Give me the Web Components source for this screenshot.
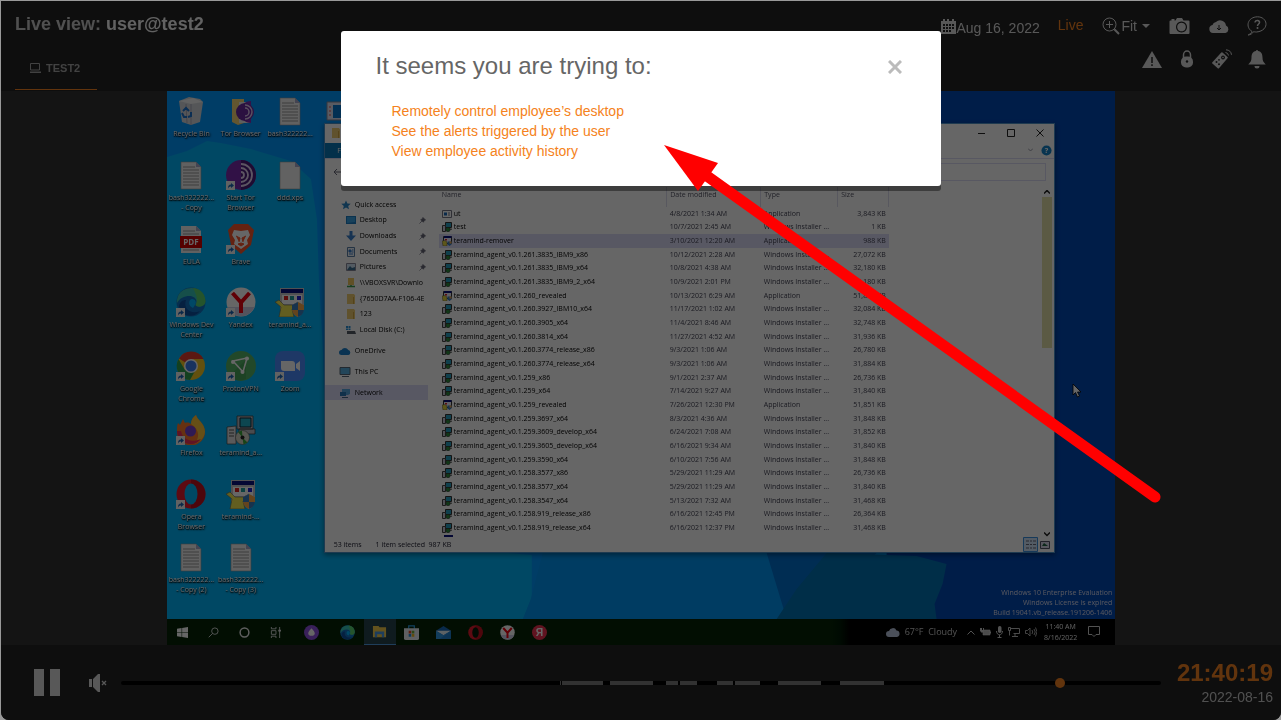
<!DOCTYPE html>
<html lang="en">
<head>
<meta charset="utf-8">
<title>Live view: user@test2</title>
<style>
  html, body { margin: 0; min-height: 100%; }
  body { font-family: "Liberation Sans", Arial, sans-serif; background: #999; }
</style>
</head>
<body>
<live-app></live-app>
<script>
const ICONS = {
  laptop: ['0 0 12 12', '<path d="M1.5 1.5h9v6.5h-9z" fill="none" stroke="currentColor"/><path d="M1 9.5h11v1.5H1z" fill="currentColor"/>'],
  calendar: ['0 0 15 15', '<path fill="currentColor" fill-rule="evenodd" d="M0 2h2V0h2v2h2V0h2v2h3V0h2v2h2v13H0zM2 5v2h2V5zm3 0v2h2V5zm3 0v2h2V5zm3 0v2h2V5zM2 8v2h2V8zm3 0v2h2V8zm3 0v2h2V8zm3 0v2h2V8zM2 11v2h2v-2zm3 0v2h2v-2zm3 0v2h2v-2z"/>'],
  zoom: ['0 0 18 18', '<g fill="none" stroke="currentColor"><circle cx="7.5" cy="7.5" r="6.5"/><path d="M7.5 4v7M4 7.5h7"/><path d="M12.3 12.3l4.7 4.7" stroke-width="2"/></g>'],
  caret: ['0 0 8 4', '<path d="M0 0h8L4 4z" fill="currentColor"/>'],
  camera: ['0 0 20 16', '<path fill="currentColor" fill-rule="evenodd" d="M1 2.500h1V1h3v1.500h1L7.500 0h5L14 2.500h5a1 1 0 0 1 1 1V15a1 1 0 0 1-1 1H1a1 1 0 0 1-1-1V3.500a1 1 0 0 1 1-1zM12 3.500a5.500 5.500 0 1 0 .01 0zm0 1.200a4.300 4.300 0 1 1-.01 0z"/>'],
  cloud: ['0 0 20 14', '<path fill="currentColor" d="M4 14a4 4 0 0 1-.5-7.900A4 4 0 0 1 7 3a6 6 0 0 1 10 3.500A4 4 0 0 1 16.500 14z"/><path d="M10 6v5M8 9l2 2 2-2" stroke="#232323" fill="none"/>'],
  help: ['0 0 20 20', '<path fill="none" stroke="currentColor" d="M5 15.500C-2 11 .5 1 10.500.8c11 .2 12 14-1 15.200-1.500 0-2-.2-3-.3-1 1.800-3 3.100-5.300 3.300C3 18 4.500 17 5 15.500z"/><path fill="none" stroke="currentColor" stroke-width="1.500" d="M8 6.500c.2-3 5-2.500 4.500.2-.3 1.500-2 1.300-2 3.300"/><circle cx="10.500" cy="12" r="1" fill="currentColor"/>'],
  warn: ['0 0 20 17', '<path fill="currentColor" d="M10 0l10 17H0z"/><path stroke="#232323" stroke-width="1.500" d="M10 6v6M10 13.300v1.700"/>'],
  lock: ['0 0 20 18', '<path d="M6.500 8V5a3.500 4 0 0 1 7 0v3" fill="none" stroke="currentColor" stroke-width="1.500"/><rect x="4" y="6.500" width="12" height="11" rx="5" fill="currentColor"/><circle cx="10" cy="11.500" r="1.200" fill="#232323"/>'],
  remote: ['0 0 20 20', '<path fill="currentColor" d="M10.500 3.500l5 4.500a1 1 0 0 1 0 1.300L7 19.200a1 1 0 0 1-1.300 0L.4 14.500a1 1 0 0 1 0-1.300L9.300 3.600a1 1 0 0 1 1.200-.1z"/><g fill="#232323"><circle cx="11" cy="8.500" r="1.900"/><circle cx="4.500" cy="13" r="1"/><circle cx="7" cy="15.300" r="1"/><circle cx="7" cy="10.800" r=".9"/></g><circle cx="11" cy="8.500" r=".8" fill="currentColor"/><path d="M13.500 3.500q2.500.2 3 3M14 .8q5 .4 5.500 5" fill="none" stroke="currentColor"/>'],
  bell: ['0 0 20 20', '<path fill="currentColor" d="M9 2a1 1 0 0 1 2 0c3.500.6 4.500 3.500 4.500 6.500 0 3.500 1 4.500 3.200 7H1.300c2.200-2.500 3.200-3.500 3.200-7C4.500 5.500 5.500 2.600 9 2zM7.500 17h5a2.500 2.500 0 0 1-5 0z"/>'],
  pause: ['0 0 26 27', '<path fill="currentColor" d="M0 0h10v27H0zM16 0h10v27H16z"/>'],
  mute: ['0 0 18 18', '<path fill="currentColor" d="M0 5h3v8H0zM4 5l5-5h2v18H9l-5-5z"/><path d="M13 7l4 4M17 7l-4 4" stroke="currentColor" stroke-width="1.300"/>'],
  close: ['0 0 14 14', '<path d="M1 1l12 12M13 1L1 13" stroke="currentColor" stroke-width="3"/>'],

  bin: ['0 0 30 30', '<path d="M3 5l10-4 11 2 3 3-3 20-9 3-9-3z" fill="#d5d8dc"/><path d="M3 5l12 3 12-2-10-4z" fill="#f4f4f4"/><path d="M15 8v21M10 8l1 19" stroke="#aab" fill="none"/><path d="M7 15l3-3 3 3M6 17l2 4h3M12 21l3-1v-4" fill="none" stroke="#1b74d0" stroke-width="2"/>'],
  torfolder: ['0 0 30 30', '<path d="M6 3h12v24l-6 2-6-3z" fill="#f7d678"/><path d="M13 6h12v21H13z" fill="#eee"/><path d="M25 5a11 11 0 0 0 0 22z" fill="#7d2db5"/><circle cx="19" cy="16" r="9" fill="#6b2aa0"/><path d="M19 9a7 7 0 0 1 0 14M19 12a4 4 0 0 1 0 8" fill="none" stroke="#e0c8f0" stroke-width="1.500"/>'],
  textfile: ['0 0 30 30', '<path d="M5 2h15l5 5v22H5z" fill="#f3f3f3" stroke="#999" stroke-width=".6"/><path d="M20 2l5 5h-5z" fill="#aac"/><path d="M7 7h12M7 10h16M7 13h16M7 16h16M7 19h16M7 22h16M7 25h16" stroke="#999"/>'],
  blankfile: ['0 0 30 30', '<path d="M5 2h15l5 5v22H5z" fill="#f5f5f5" stroke="#999" stroke-width=".6"/><path d="M20 2l5 5h-5z" fill="#aac"/>'],
  pdf: ['0 0 30 30', '<path d="M5 2h15l5 5v22H5z" fill="#f3f3f3"/><path d="M20 2l5 5h-5z" fill="#aac"/><path d="M7 7h12M7 10h16M7 26h16" stroke="#999"/><path d="M4 12h22v12H4z" fill="#d40000"/><text x="15" y="21" font-family="Open Sans" font-weight="700" font-size="8" text-anchor="middle" fill="#fff">PDF</text>'],
  tor: ['0 0 30 30', '<circle cx="15" cy="15" r="15" fill="#7a2bb0"/><path d="M15 0a15 15 0 0 1 0 30z" fill="#4b1b7a"/><path d="M15 4a11 11 0 0 1 0 22M15 8a7 7 0 0 1 0 14M15 12a3 3 0 0 1 0 6" fill="none" stroke="#e6d4f4" stroke-width="1.800"/>'],
  brave: ['0 0 30 30', '<path d="M8 0h14l6 6-3 15-10 9-10-9L2 6z" fill="#fb542b"/><path d="M8 6l7 1 7-1 2 5-3 5 1 4-7 5-7-5 1-4-3-5z" fill="#fff"/><path d="M10 12l4 2-1 4M20 12l-4 2 1 4M12 20l3-1 3 1-3 2z" fill="#fb542b" stroke="#fb542b"/>'],
  edge: ['0 0 30 30', '<circle cx="15" cy="15" r="14.500" fill="#1273c4"/><path d="M2 9C7-3 29-2 29.500 14c0 6-8 7-10 4 3-5-1-9-6-9C8 9 4 11 1 16q-.5-3 1-7z" fill="#36c6b8"/><path d="M17 1c9 1 12 7 12.500 13 0 6-8 7-10 4 3-5 1-10-2.500-17z" fill="#66d45a" opacity=".8"/><path d="M10 13c-3 8 4 15 14 11-5 7-19 7-21-5 1-4 3-6 7-6z" fill="#0c4fa0"/><path d="M19 18c2-3 0-6-3-6-4 1-4 7 1 9z" fill="#00b4ff"/>'],
  yandex: ['0 0 30 30', '<circle cx="15" cy="15" r="14.500" fill="#fff"/><path d="M1.500 20h27a14.500 14.500 0 0 1-27 0z" fill="#cfd0e8"/><path d="M6.500 6L15 15.500V26M23.500 6L15 15.500" fill="none" stroke="#f00010" stroke-width="4"/>'],
  setup: ['0 0 30 30', '<path d="M5 1h24v22H5z" fill="#c8c8cc"/><path d="M6 2h22v4H6z" fill="#0a1280"/><path d="M7 8h20v9H7z" fill="#fff"/><path d="M9 9h4v4H9z" fill="#e02020"/><path d="M15 9h4v4h-4z" fill="#20a0a0"/><path d="M22 9h4v4h-4z" fill="#2020d0"/><path d="M0 15l4-2 5 5h9l5-3v3l-6 4 2 8H4l2-10z" fill="#f4ec50" stroke="#665" stroke-width=".6"/><path d="M17 18l6-3 6 3c0 6-2 10-6 12-4-2-6-6-6-12z" fill="#eef"/><path d="M23 15l6 3v5h-6zM17 23h6v7c-3-1-5-3-6-7z" fill="#f9a94b"/><path d="M23 15l-6 3v5h6zM23 23h6c-1 4-3 6-6 7z" fill="#3a7fc0"/>'],
  chrome: ['0 0 30 30', '<circle cx="15" cy="15" r="14" fill="#f8c822"/><path d="M15 15L3 7.500a14 14 0 0 1 24.500.5H15z" fill="#e33b2e"/><path d="M15 15l-6 4-6.500-11A14 14 0 0 0 14 29l5-9z" fill="#30a14e"/><circle cx="15" cy="15" r="7" fill="#fff"/><circle cx="15" cy="15" r="5.500" fill="#3b7ded"/>'],
  proton: ['0 0 30 30', '<circle cx="15" cy="15" r="15" fill="#56b366"/><path d="M20 9v19A15 15 0 0 1 3 25z" fill="#3f9950" opacity=".6"/><path d="M7 10l14-3-4 14z" fill="none" stroke="#fff" stroke-width="1.600"/><g fill="#fff"><circle cx="7" cy="11" r="2"/><circle cx="21" cy="7.500" r="2"/><circle cx="16.500" cy="21" r="2"/></g>'],
  zoomapp: ['0 0 30 30', '<rect width="30" height="30" rx="8" fill="#4a8cff"/><path d="M6 10h11a3 3 0 0 1 3 3v7H9a3 3 0 0 1-3-3zM21 13l4-3v10l-4-3z" fill="#fff"/>'],
  firefox: ['0 0 30 30', '<path d="M2 8l2 2 3-6 2 4c3-1 5 0 6 1 0-4 2-7 5-9 1 5 9 8 9 17a14 13.500 0 0 1-28 0C1 13 1 10 2 8z" fill="#ff7a2a"/><path d="M20 0c1 5 9 8 9 17-1 7-6 11-11 12 6-6 6-14-3-20 0-4 2-7 5-9z" fill="#ffc53a"/><path d="M1 16c0 8 6 13 14 13 4 0 8-2 10-5-10 4-18 1-20-8z" fill="#f0325a"/><circle cx="14.500" cy="16" r="5.500" fill="#7542d0"/>'],
  msi: ['0 0 30 30', '<path d="M11 1h16v13H11zM13 14h16v5H13z" fill="#b8bcc4" stroke="#333" stroke-width=".7"/><path d="M14 3h11v9H14z" fill="#20b0c8" stroke="#123" /><path d="M1 12l9-1v18H1z" fill="#e0e0e4" stroke="#444" stroke-width=".7"/><path d="M3 15h5M3 18h5M3 21h5" stroke="#555"/><circle cx="16.500" cy="22.500" r="7" fill="#d6d8c8" stroke="#555" stroke-width=".6"/><path d="M16.500 22.500L12 17l4-1.500zM16.500 22.500l5 5-4 2z" fill="#3aa83a"/><circle cx="16.500" cy="22.500" r="2" fill="#222"/>'],
  msismall: ['0 0 10 10', '<path d="M3.500.5h6v5h-6z" fill="#28a0c0" stroke="#333"/><path d="M.5 3.500h3v6h-3z" fill="#ccd" stroke="#444"/><path d="M5 6.500h5v1.500H5z" fill="#888"/><circle cx="6" cy="7.500" r="2.200" fill="#2a8a3a" stroke="#333" stroke-width=".6"/>'],
  setupsmall: ['0 0 10 10', '<path d="M1.500.5h8v7h-8z" fill="#eef" stroke="#333"/><path d="M2 0h7.500v2H2z" fill="#0a1280"/><path d="M3 3h2v1.500H3z" fill="#e02020"/><path d="M0 5l3-.5 2 1.500v4H1z" fill="#e8d840" stroke="#554" stroke-width=".5"/><path d="M5.500 5.500h4v3L7.500 10l-2-1.500z" fill="#3a7fc0"/><path d="M7.500 5.500h2v2h-2z" fill="#f9a94b"/>'],
  opera: ['0 0 30 30', '<ellipse cx="15" cy="15" rx="14.500" ry="14.500" fill="#e81a2c"/><path d="M15 .5a14.500 14.500 0 0 1 0 29z" fill="#b00a1a" opacity=".7"/><ellipse cx="15" cy="15" rx="6.500" ry="10.500" fill="var(--hole,#00b4fa)"/>'],
  shortcut: ['0 0 9 9', '<path d="M0 0h9v9H0z" fill="#f4f4f4"/><path d="M2 7.500c0-3 1-4 3-4V2l3 2.500L5 7V5.500c-1.500 0-2 .5-3 2z" fill="#1a66b8"/>'],
  win: ['0 0 12 12', '<path fill="#fff" d="M0 1.800l5-.7v4.500H0zM5.600 1L12 0v5.600H5.600zM0 6.200h5v4.600l-5-.7zM5.600 6.200H12V12l-6.400-1z"/>'],
  search: ['0 0 12 12', '<g fill="none" stroke="#ddd"><circle cx="7.500" cy="4.500" r="3.500"/><path d="M5 7L.8 11.200"/></g>'],
  cortana: ['0 0 12 12', '<circle cx="6" cy="6" r="4.800" fill="none" stroke="#eee" stroke-width="1.600"/>'],
  taskview: ['0 0 12 12', '<g fill="none" stroke="#ddd"><path d="M1.500 0v2h5V0M1.500 4h5v4h-5zM1.500 12v-2h5v2M10.500 0v12"/></g><path d="M9 3h3v2H9z" fill="#ddd"/>'],
  alice: ['0 0 16 16', '<circle cx="8" cy="8" r="8" fill="#8e4fe0"/><path d="M8 3.500c2 2 3.500 4 3.500 5.500A3 2.500 0 0 1 8 11.500 3 2.500 0 0 1 4.500 9C4.500 7.500 6 5.500 8 3.500z" fill="#fff"/>'],
  folders: ['0 0 16 16', '<path d="M1 2h6l1 1.500h7V14H1z" fill="#f8ce4b"/><path d="M3 8h10v6h-2.500v-3h-5v3H3z" fill="#4a9be8"/>'],
  store: ['0 0 16 16', '<path d="M5 4V1h6v3" fill="none" stroke="#2ca0e8" stroke-width="1.300"/><path d="M0 3.500h16V14a2 2 0 0 1-2 2H2a2 2 0 0 1-2-2z" fill="#eef0f4"/><path d="M5 6h2.700v3H5z" fill="#e8492a"/><path d="M8.300 6H11v3H8.300z" fill="#6fb23c"/><path d="M5 9.600h2.700v3H5z" fill="#2090e0"/><path d="M8.300 9.600H11v3H8.300z" fill="#f3b81c"/>'],
  mail: ['0 0 16 16', '<path d="M0 6l8-5 8 5v9H0z" fill="#1668b8"/><path d="M0 6h16l-8 5z" fill="#e8f4fc"/><path d="M0 6l8 5 8-5v9H0z" fill="#2d98e6"/><path d="M16 6v9H4z" fill="#1f7fd0"/>'],
  ya: ['0 0 16 16', '<circle cx="8" cy="8" r="8" fill="#f03050"/><text x="8" y="12" text-anchor="middle" font-family="Liberation Sans" font-weight="700" font-size="11" fill="#fff">Я</text>'],
  weather: ['0 0 14 10', '<path d="M3 10a3 3 0 0 1 0-6A4 4 0 0 1 10.500 3.500 3.300 3.300 0 0 1 11 10z" fill="#bcc8e0"/>'],
  up: ['0 0 8 5', '<path d="M.5 4.500L4 1l3.500 3.500" fill="none" stroke="#ccc"/>'],
  battery: ['0 0 11 8', '<path d="M3 2h7v5H3z" fill="#bbb" stroke="#ddd" stroke-width=".6"/><path d="M10 3.500h1v2h-1zM0 0h2v2h1V0h1v3L2 5 0 3z" fill="#ccc"/>'],
  mic: ['0 0 7 12', '<rect x="2" width="3.500" height="7" rx="1.700" fill="#ccc"/><path d="M.5 5c0 5 6 5 6 0M3.500 9v3M1.500 11.500h4" stroke="#ccc" fill="none"/>'],
  net: ['0 0 12 10', '<path d="M2.500 1.500h9v5h-6M7 6.500V9M4 9.500h6M.5.500h2v3h-2zM1.500 3.500v5" fill="none" stroke="#bbb"/>'],
  sound: ['0 0 12 10', '<path d="M.5 3.500h2L5 1v8L2.500 6.500h-2zM7 3q1.500 2 0 4M9 2q2.500 3 0 6M10.500.500q3 4 0 9" fill="none" stroke="#bbb" stroke-width=".9"/>'],
  note: ['0 0 12 12', '<path d="M.5.500h11v8H8l-2 2-2-2H.5z" fill="none" stroke="#ccc"/>'],
  star: ['0 0 10 10', '<path d="M5 .500l1.400 3 3.300.3-2.500 2.200.8 3.300-3-1.800-3 1.800.8-3.300L.3 3.800l3.300-.3z" fill="#2a86c8"/>'],
  desk: ['0 0 10 10', '<path d="M0 1h10v8H0z" fill="#1c7cc4"/><path d="M1 2h8v5L1 8z" fill="#3aa2e4"/>'],
  down: ['0 0 10 10', '<path d="M3.500 0h3v4.500H10L5 10 0 4.500h3.500z" fill="#3a80cc"/>'],
  doc: ['0 0 10 10', '<path d="M1.500.500h7v9h-7z" fill="#f0f4fa" stroke="#5a7fa8"/><path d="M3 3h2v2H3zM5.500 5h2M3 7h4M6 3h1.500" stroke="#3a80cc" fill="#3a80cc"/>'],
  pic: ['0 0 10 10', '<path d="M.5 1.500h9v7h-9z" fill="#cfe4f4" stroke="#889"/><path d="M1 8l3-4 2 2 3-1v3z" fill="#3a6f90"/>'],
  netfolder: ['0 0 10 10', '<path d="M2 0h6v7H2z" fill="#f0c860"/><path d="M1 8.500h8M5 7v2" stroke="#3a9a4a" stroke-width="1.500"/>'],
  folder: ['0 0 10 10', '<path d="M1 0h7l1 1.500V10H1z" fill="#f0cc70"/><path d="M7.500 3v7" stroke="#d4a840"/>'],
  disk: ['0 0 10 10', '<path d="M1 6h8l1 3H1z" fill="#555c66"/><path d="M0 1h2v2H0zM2.500 1h2v2h-2zM0 3.500h2v1.500H0zM2.500 3.500h2v1.500h-2z" fill="#2a90d8"/>'],
  onedrive: ['0 0 12 10', '<path d="M2.500 9A2.500 2.500 0 0 1 2.500 4 3.800 3.800 0 0 1 9.300 4 2.600 2.600 0 0 1 9.500 9z" fill="#1a80cc"/>'],
  pc: ['0 0 12 10', '<path d="M1 .5h10v7H1z" fill="#58b0e0" stroke="#567"/><path d="M3 9.500h7" stroke="#567"/>'],
  lan: ['0 0 12 10', '<path d="M3 1h8v5l-2 1H3z" fill="#58a8e0"/><path d="M1 4h6v4H1z" fill="#2a78b8"/><path d="M3 9.500h6" stroke="#468"/>'],
  pin: ['0 0 8 8', '<path d="M4.500.500l3 3-1.500.5L5 6 2 3l2-1zM3.500 4.500L.5 7.500" fill="#667" stroke="#667" stroke-width=".8"/>'],
  exe: ['0 0 10 10', '<path d="M.5 1.500h9v7h-9z" fill="#fff" stroke="#778"/><path d="M2 3.500h3v3H2z" fill="#1a6ab8"/><path d="M6 4h2M6 6h2" stroke="#778"/>'],
  help2: ['0 0 12 12', '<circle cx="6" cy="6" r="5.500" fill="#1583c8"/><text x="6" y="9" text-anchor="middle" font-family="Open Sans" font-weight="700" font-size="8" fill="#fff">?</text>'],
  cursor: ['0 0 10 15', '<path d="M1 1v11l2.500-2.500L5.500 14l2-1-2-4H9z" fill="#fff" stroke="#000" stroke-width=".8"/>'],
  monitorfile: ['0 0 16 20', '<path d="M1 1h18v18H1z" fill="#dfe4f4" stroke="#889"/><path d="M7 4h10v13H7z" fill="#0878d0"/><path d="M3 6h2M3 10h2M3 14h2" stroke="#e05050"/>']
};
const icon = (n, w, h, extra = '') => `<svg class="i ${extra}" width="${w}" height="${h || w}" viewBox="${ICONS[n][0]}" aria-hidden="true">${ICONS[n][1]}</svg>`;
const BASE = `*{box-sizing:border-box} svg{display:block;flex:none} button{font:inherit;color:inherit;background:none;border:0;padding:0;margin:0;display:block}`;
function define(name, css, html) {
  customElements.define(name, class extends HTMLElement {
    connectedCallback() {
      if (this.shadowRoot) return;
      this.attachShadow({ mode: 'open' }).innerHTML = `<style>${BASE}${css}</style>` + (typeof html === 'function' ? html(this) : html);
    }
  });
}

define('live-header', `
  :host{display:flex;justify-content:space-between;background:#232323;color:#dcdcdc;padding:0 14px}
  .left{display:flex;flex-direction:column;justify-content:space-between}
  h1{margin:12px 0 0;font-size:18px;line-height:22px;color:#c8c8c8} h1 b{color:#f4f4f4}
  .tab{display:flex;align-items:center;gap:5px;width:82px;height:43px;padding-left:14px;border-bottom:1px solid #f58220;font-size:11px;font-weight:700;color:#a4a4a4;margin-bottom:1px}
  .tools{display:flex;flex-direction:column;gap:13px;padding-top:15px;font-size:14px;line-height:20px}
  .row{display:flex;justify-content:flex-end;align-items:center;height:20px;gap:18px}
  .row.two{gap:15px}
  .date,.fit{display:flex;align-items:center}
  .date{padding-top:4px} .date svg{margin-bottom:4px}
  .live{color:#f58220;padding-bottom:2px;margin-right:1px}
  .fit{gap:1px;margin-right:1px} .fit svg.caret{margin-left:4px} .shot{margin-right:1px}`,
  `<div class="left"><h1>Live view: <b>user@test2</b></h1><button class="tab" role="tab">${icon('laptop', 12)}<span>TEST2</span></button></div>
   <div class="tools">
    <div class="row"><button class="date">${icon('calendar', 15)}<span>Aug 16, 2022</span></button><button class="live">Live</button>
     <button class="fit">${icon('zoom', 18)}<span>Fit</span>${icon('caret', 8, 4, 'caret')}</button>
     <button class="shot" aria-label="Screenshot">${icon('camera', 21, 16)}</button><button aria-label="Download">${icon('cloud', 20, 14)}</button><button aria-label="Help">${icon('help', 20)}</button></div>
    <div class="row two"><button aria-label="Alerts">${icon('warn', 20, 17)}</button><button aria-label="Lock">${icon('lock', 20, 18)}</button><button aria-label="Remote control">${icon('remote', 20)}</button><button aria-label="Notifications">${icon('bell', 20)}</button></div>
   </div>`);

define('desk-shortcut', `
  :host{display:flex;flex-direction:column;align-items:center;text-align:center;gap:3px;min-width:0}
  .pic{position:relative} .arrow{position:absolute;left:0;bottom:0}
  span{color:#fff;text-shadow:0 1px 1px #000,1px 1px 2px #000;line-height:10px;white-space:pre}`,
  el => `<div class="pic">${icon(el.getAttribute('icon'), 30)}${el.hasAttribute('linked') ? icon('shortcut', 9, 9, 'arrow') : ''}</div><span><slot></slot></span>`);

const NAV = [['star', 'Quick access', 0, 0], ['desk', 'Desktop', 1, 1], ['down', 'Downloads', 1, 1], ['doc', 'Documents', 1, 1], ['pic', 'Pictures', 1, 1],
  ['netfolder', '\\\\VBOXSVR\\Downlo', 1, 0], ['folder', '{7650D7AA-F106-4E', 1, 0], ['folder', '123', 1, 0], ['disk', 'Local Disk (C:)', 1, 0]];
const A = 'teramind_agent_v0.1.';
const FILES = [['exe', 'ut', '4/8/2021 1:34 AM', 'A', '3,843'], ['msismall', 'test', '10/7/2021 2:45 AM', 'W', '1'], ['setupsmall', 'teramind-remover', '3/10/2021 12:20 AM', 'A', '988'],
  ['msismall', A + '261.3835_IBM9_x86', '10/12/2021 2:28 AM', 'W', '27,072'], ['msismall', A + '261.3835_IBM9_x64', '10/8/2021 4:38 AM', 'W', '32,180'],
  ['msismall', A + '261.3835_IBM9_2_x64', '10/9/2021 2:01 PM', 'W', '32,180'], ['setupsmall', A + '260_revealed', '10/13/2021 6:29 AM', 'A', '51,851'],
  ['msismall', A + '260.3927_IBM10_x64', '11/17/2021 1:02 AM', 'W', '32,084'], ['msismall', A + '260.3905_x64', '11/4/2021 8:46 AM', 'W', '32,748'],
  ['msismall', A + '260.3814_x64', '11/27/2021 4:52 AM', 'W', '31,936'], ['msismall', A + '260.3774_release_x86', '9/3/2021 1:06 AM', 'W', '26,780'],
  ['msismall', A + '260.3774_release_x64', '9/3/2021 1:06 AM', 'W', '31,884'], ['msismall', A + '259_x86', '9/1/2021 2:37 AM', 'W', '26,736'],
  ['msismall', A + '259_x64', '7/14/2021 9:27 AM', 'W', '31,840'], ['setupsmall', A + '259_revealed', '7/26/2021 12:30 PM', 'A', '51,851'],
  ['msismall', A + '259.3697_x64', '8/3/2021 4:36 AM', 'W', '31,848'], ['msismall', A + '259.3609_develop_x64', '6/24/2021 7:08 AM', 'W', '31,852'],
  ['msismall', A + '259.3605_develop_x64', '6/16/2021 9:34 AM', 'W', '31,840'], ['msismall', A + '259.3590_x64', '6/10/2021 7:56 AM', 'W', '31,848'],
  ['msismall', A + '258.3577_x86', '5/29/2021 11:29 AM', 'W', '26,736'], ['msismall', A + '258.3577_x64', '5/29/2021 11:29 AM', 'W', '31,840'],
  ['msismall', A + '258.3547_x64', '5/13/2021 7:32 AM', 'W', '31,468'], ['msismall', A + '258.919_release_x86', '6/16/2021 12:45 PM', 'W', '26,364'],
  ['msismall', A + '258.919_release_x64', '6/16/2021 12:37 PM', 'W', '31,468']];

define('file-explorer', `
  :host{display:flex;flex-direction:column;background:#fff;border:1px solid #4a90c8;color:#000;box-shadow:0 2px 5px rgba(0,0,0,.4)}
  .title{display:flex;justify-content:space-between;align-items:center;height:18px;padding:0 10px 0 6px}
  .title div{display:flex;gap:21px;align-items:center}
  .ribbon{display:flex;justify-content:space-between;align-items:center;height:17px;border-bottom:1px solid #dcdcf4;padding-right:2px}
  .ribbon b{font-weight:400;background:#0878b8;color:#fff;height:15px;width:36px;text-align:center;line-height:15px}
  .ribbon div{display:flex;gap:8px;align-items:center}
  .addr{display:flex;align-items:center;gap:12px;height:26px;padding:0 8px}
  .addr i{flex:1;height:18px;border:1px solid #dcdcf4}
  .body{display:flex;flex:1;min-height:0}
  nav{width:103px;padding-top:12px;margin-right:11px}
  .fav{display:grid;grid-auto-rows:1fr;grid-template-columns:minmax(0,1fr);height:141px;margin-bottom:5px}
  .n{display:flex;align-items:center;gap:4px;padding-left:16px;white-space:nowrap}
  .n.sub{padding-left:21px} .n span{flex:1;min-width:0}
  .n svg.pin{margin-right:2px}
  .roots{display:flex;flex-direction:column;gap:6px} .roots .n{height:15px;padding-left:14px}
  .n.on{background:#dcdcf8}
  .files{flex:1;min-width:0;padding-top:2px}
  table{border-collapse:collapse;table-layout:fixed;width:450px;height:348px}
  th,td{padding:0;font-weight:400;text-align:left;white-space:nowrap;line-height:12px}
  th{height:20px;color:#556;border-right:1px solid #dde;padding:0 0 4px 3px}
  td{color:#445;padding-left:3px} td:first-child{color:#000} td:last-child{text-align:right;padding:0 3px 0 0}
  td div{display:flex;align-items:center;gap:2px} tr.on{background:#dcdcf8}
  .next{width:9px;height:2px;margin-left:5px;background:#0a1280}
  .bar{width:11px;display:flex;flex-direction:column;align-items:center;padding-top:5px;margin-right:1px}
  .thumb{width:10px;height:151px;background:#e4e1aa;margin:3px 0 auto}
  .status{display:flex;align-items:center;gap:14px;height:15px;padding:0 4px 0 9px;color:#223}
  .status div{display:flex;gap:2px;align-items:center;margin-left:auto}`,
  () => `<div class="title">${icon('folder', 10, 12)}<div>
     <svg width="8" height="8"><path d="M0 4.500h7" stroke="#222"/></svg><svg width="8" height="8"><path d="M.5.500h7v7h-7z" fill="none" stroke="#222"/></svg><svg width="8" height="8"><path d="M.5.500l7 7M7.500.500l-7 7" stroke="#222"/></svg></div></div>
   <div class="ribbon"><b>File</b><div><svg width="5" height="4"><path d="M0 .5l2.500 2.500L5 .5" fill="none" stroke="#99a"/></svg>${icon('help2', 11)}</div></div>
   <div class="addr"><svg width="9" height="8"><path d="M9 4H1M4 1L1 4l3 3" fill="none" stroke="#667"/></svg><i></i></div>
   <div class="body"><nav><div class="fav">${NAV.map(n => `<div class="n ${n[2] ? 'sub' : ''}">${icon(n[0], 10)}<span>${n[1]}</span>${n[3] ? icon('pin', 7, 7, 'pin') : ''}</div>`).join('')}</div>
    <div class="roots"><div class="n">${icon('onedrive', 12, 10)}<span>OneDrive</span></div><div class="n">${icon('pc', 12, 10)}<span>This PC</span></div><div class="n on">${icon('lan', 12, 10)}<span>Network</span></div></div></nav>
    <div class="files"><table><colgroup><col style="width:228px"><col style="width:94px"><col style="width:77px"><col style="width:51px"></colgroup>
     <thead><tr><th>Name</th><th>Date modified</th><th>Type</th><th>Size</th></tr></thead>
     <tbody>${FILES.map((f, i) => `<tr class="${i === 2 ? 'on' : ''}"><td><div>${icon(f[0], 10)}${f[1]}</div></td><td>${f[2]}</td><td>${f[3] === 'A' ? 'Application' : 'Windows Installer ...'}</td><td>${f[4]} KB</td></tr>`).join('')}</tbody></table><div class="next"></div></div>
    <div class="bar"><svg width="6" height="4"><path d="M0 3.500L3 .500l3 3" fill="none" stroke="#222" stroke-width="1.500"/></svg><div class="thumb"></div><svg width="6" height="5"><path d="M0 .500l3 3 3-3" fill="none" stroke="#222" stroke-width="1.500"/></svg></div></div>
   <div class="status"><span>53 items</span><span>1 item selected&nbsp; 987 KB</span><div><svg width="15" height="15"><path d="M.5.500h14v14H.5z" fill="#cfe4fa" stroke="#3a90e0"/><path d="M3 4h3M3 7.500h3M3 11h3M7 4h2M7 7.500h2M7 11h2M10 4h3M10 7.500h3M10 11h3" stroke="#667"/></svg><svg width="10" height="8"><path d="M.5.500h9v7h-9z" fill="#dde" stroke="#556"/><path d="M2 5l2-3 4 3z" fill="#264"/></svg></div></div>`);

define('task-bar', `
  :host{display:flex;justify-content:space-between;height:26px;background:linear-gradient(90deg,#042406 0 70%,#001a04 71%,#000 72%);color:#ccc;--hole:#061c08}
  .apps{display:grid;grid-template-columns:repeat(4,31px) 41px repeat(7,32px)}
  .apps button{display:flex;align-items:center;justify-content:center}
  .on{background:#26434e;border-bottom:1px solid #4e9ae0}
  .tray{display:flex;align-items:center;padding-right:15px;gap:5px;font-size:9px}
  .tray .w{margin-right:5px;white-space:pre} .clock{font-size:7px;line-height:11px;text-align:center;margin:0 6px 0 2px;color:#eee}`,
  () => `<div class="apps">${['win', 'search', 'cortana', 'taskview', 'alice', 'edge', 'folders', 'store', 'mail', 'opera', 'yandex', 'ya'].map((n, i) => `<button class="${i === 6 ? 'on' : ''}" aria-label="${n}">${icon(n, i < 4 ? 11 : 15)}</button>`).join('')}</div>
   <div class="tray">${icon('weather', 14, 10)}<span class="w">67°F  Cloudy</span>${icon('up', 8, 5)}${icon('battery', 11, 8)}${icon('mic', 7, 12)}${icon('net', 12, 10)}${icon('sound', 12, 10)}<div class="clock">11:40 AM<br>8/16/2022</div>${icon('note', 12, 12)}</div>`);

const DESK = [['bin', 'Recycle Bin'], ['torfolder', 'Tor Browser'], ['textfile', 'bash322222...'],
  ['textfile', 'bash322222...\n- Copy'], ['tor', 'Start Tor\nBrowser', 1], ['blankfile', 'ddd.xps'],
  ['pdf', 'EULA'], ['brave', 'Brave', 1], 0,
  ['edge', 'Windows Dev\nCenter', 1], ['yandex', 'Yandex', 1], ['setup', 'teramind_a...'],
  ['chrome', 'Google\nChrome', 1], ['proton', 'ProtonVPN', 1], ['zoomapp', 'Zoom', 1],
  ['firefox', 'Firefox', 1], ['msi', 'teramind_a...'], 0,
  ['opera', 'Opera\nBrowser', 1], ['setup', 'teramind-...'], 0,
  ['textfile', 'bash322222...\n- Copy (2)'], ['textfile', 'bash322222...\n- Copy (3)'], 0];
define('remote-screen', `
  :host{display:flex;flex-direction:column;width:74.1%;font:7px/10px "Open Sans","Noto Sans",sans-serif;overflow:hidden}
  .desk{flex:1;position:relative;background:#0048b4;min-height:528px}
  .wall{position:absolute;inset:0;width:100%;height:100%}
  .grid{position:absolute;left:0;top:5px;width:148px;height:510px;display:grid;grid-template-columns:repeat(3,minmax(0,1fr));grid-template-rows:repeat(8,minmax(0,1fr))}
  .extra{position:absolute;left:159px;top:10px}
  file-explorer{position:absolute;left:157px;top:32px;width:731px;height:430px}
  .cursor{position:absolute;left:905px;top:292px}
  .mark{position:absolute;right:3px;bottom:1px;text-align:right;color:#dde}`,
  () => `<div class="desk"><svg class="wall" viewBox="0 0 949 528" preserveAspectRatio="none">
     <path d="M0 0H500V528H0z" fill="#0098ff"/>
     <path d="M0 66l20-6 20-10 14 2 30 6 40 12 20 18 6 40 2 60 4 70 2 80 2 120 160 2 45 4 0 66H0z" fill="#00b4fa"/>
     <path d="M376 462H720V528H356l8-20z" fill="#0096f4"/>
     <path d="M600 462h110l-20 20 6 20-12 26H620z" fill="#0070d0"/>
     <path d="M660 462l90 3 30 8-4 20-8 20 2 15H610l20-30z" fill="#0072b4"/>
    </svg>
    <div class="grid">${DESK.map(d => d ? `<desk-shortcut icon="${d[0]}" ${d[2] ? 'linked' : ''}>${d[1]}</desk-shortcut>` : '<i></i>').join('')}</div>
    <div class="extra">${icon('monitorfile', 16, 20)}</div>
    <div class="mark">Windows 10 Enterprise Evaluation<br>Windows License is expired<br>Build 19041.vb_release.191206-1406</div>
    <file-explorer></file-explorer><div class="cursor">${icon('cursor', 10, 15)}</div></div><task-bar></task-bar>`);

const SEG = [[439, 440], [441, 482], [489, 532], [545, 557], [559, 576], [596, 612], [614, 639], [657, 700], [719, 763]];
const pct = v => (v / 10.4).toFixed(2) + '%';
const TRACK = `linear-gradient(90deg,#000 0,${SEG.map(([a, b]) => `#000 ${pct(a)},#7c7c7c ${pct(a)} ${pct(b)},#000 ${pct(b)}`).join(',')},#000)`;
define('player-bar', `
  :host{display:flex;align-items:center;height:75px;padding:0 8px 0 33px;background:#232323;color:#dcdcdc}
  .mute{margin:0 14px 0 29px}
  input{flex:1;min-width:0;appearance:none;margin:0;height:12px;background:none}
  input::-webkit-slider-runnable-track{height:4px;border-radius:2px;background:${TRACK}}
  input::-webkit-slider-thumb{appearance:none;width:10px;height:10px;border-radius:50%;background:#f58220;margin-top:-3px}
  .time{width:112px;text-align:right;font-size:14px;line-height:20px;color:#c8c8c8}
  .time b{display:block;font-size:24px;line-height:28px;color:#f58220}`,
  `<button aria-label="Pause">${icon('pause', 26, 27)}</button><button class="mute" aria-label="Unmute">${icon('mute', 18)}</button>
   <input type="range" aria-label="Timeline" min="0" max="1030" value="934"><div class="time"><b>21:40:19</b>2022-08-16</div>`);

define('hint-dialog', `
  :host{display:block;width:600px;max-width:90%;background:#fff;border-radius:3px;box-shadow:0 5px 0 rgba(0,0,0,.4);padding:19px 35px 25px;color:#666}
  header{display:flex;justify-content:space-between;align-items:center;height:32px}
  h2{margin:0;font-size:24px;font-weight:400} button{color:#bbb;margin-right:4px;padding-top:2px}
  .links{margin:19px 0 0;padding:0 0 0 16px;font-size:14px;line-height:20px}
  ::slotted(a){display:block;color:#f58220;text-decoration:none}`,
  `<header><h2>It seems you are trying to:</h2><button aria-label="Close">${icon('close', 14)}</button></header><div class="links"><slot></slot></div>`);

define('live-app', `
  :host{display:flex;flex-direction:column;min-height:100vh;position:relative;background:#999}
  .app{flex:1;display:flex;flex-direction:column;filter:brightness(.4);margin:1px 0 0 1px;border-radius:0 0 8px 8px;overflow:hidden;background:#323232}
  live-header{height:90px}
  .stage{flex:1;display:flex;justify-content:center;min-height:0}
  .over{position:absolute;inset:0;padding-top:31px;display:flex;justify-content:center;align-items:flex-start}
  .arrow{position:absolute;left:0;top:0;width:100%;height:100%;pointer-events:none}
  a{display:block;color:#f58220;text-decoration:none}`,
  `<div class="app"><live-header></live-header><main class="stage"><remote-screen></remote-screen></main><player-bar></player-bar></div>
   <div class="over"><hint-dialog role="dialog"><a href="#control">Remotely control employee’s desktop</a><a href="#alerts">See the alerts triggered by the user</a><a href="#history">View employee activity history</a></hint-dialog></div>
   <svg class="arrow" viewBox="0 0 1281 720" aria-hidden="true"><path d="M700 171L1155 497" stroke="#f00" stroke-width="11" stroke-linecap="round"/><path d="M664 145l54 18-20 28z" fill="#f00"/></svg>`);
</script>
</body>
</html>
